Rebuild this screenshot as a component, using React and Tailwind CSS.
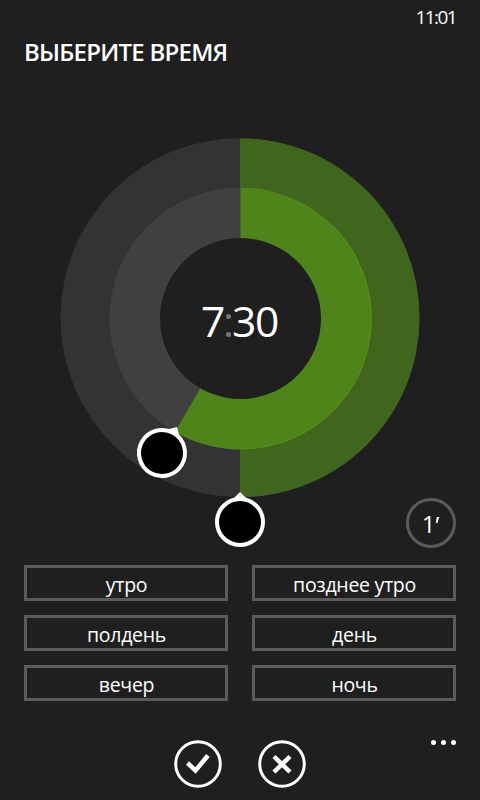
const presets = ['утро', 'позднее утро', 'полдень', 'день', 'вечер', 'ночь'];

function Handle({ transform }) {
  return (
    <g transform={transform}>
      <path d="M-7 -23 L0 -30 L7 -23 Z" fill="#fff" />
      <circle r="23" fill="#000" stroke="#fff" strokeWidth="4" />
    </g>
  );
}

function Dial() {
  return (
    <svg className="block" width="480" height="440" viewBox="0 120 480 440">
      <circle cx="240" cy="317.7" r="179.5" fill="#333333" />
      <path d="M240 138.2 A179.5 179.5 0 0 1 240 497.2 Z" fill="#3f661c" />
      <circle cx="240.5" cy="318.5" r="131" fill="#404040" />
      <path d="M240.5 318.5 V187.5 A131 131 0 1 1 175 431.9 Z" fill="#4e841a" />
      <path d="M333 226 A130.5 130.5 0 0 1 240.5 449" fill="none" stroke="#529512" strokeWidth="1" />
      <circle cx="240.5" cy="318.5" r="80.5" fill="#1f1f1f" />
      <Handle transform="translate(162 453) rotate(30)" />
      <Handle transform="translate(240 522)" />
    </svg>
  );
}

export default function App() {
  return (
    <main className="flex h-[800px] w-[480px] flex-col overflow-hidden bg-[#1f1f1f] font-['Open_Sans','Noto_Sans',sans-serif] text-white">
      <header className="flex h-[120px] flex-col px-6">
        <time className="mt-[3px] h-7 self-end text-[19px] leading-7 tracking-[-1.6px]">11:01</time>
        <h1 className="mt-[5px] text-[24px] leading-8 font-semibold tracking-[-0.75px] whitespace-nowrap">ВЫБЕРИТЕ ВРЕМЯ</h1>
      </header>
      <section className="relative h-[445px]">
        <Dial />
        <div className="absolute top-[171px] left-[201px] flex h-[60px] items-center text-[42.5px] leading-[60px] tracking-[-1.3px]">
          <span>7</span>
          <span className="flex h-[60px] w-2 flex-col items-center gap-[13px] pt-[22.5px]">
            <i className="h-[5px] w-[5px] rounded-full bg-[#777]" />
            <i className="h-[5px] w-[5px] rounded-full bg-[#777]" />
          </span>
          <span>30</span>
        </div>
        <button className="absolute top-[378px] left-[406px] flex h-[50px] w-[50px] items-center justify-center rounded-full border-3 border-[#5b5b5b] pt-px text-[24px]">
          <span>1</span>
          <svg className="-mt-2" width="5" height="8" viewBox="0 0 5 8">
            <path d="M1.8 1 H4.3 L2.3 7 H0.8 Z" fill="#fff" />
          </svg>
        </button>
      </section>
      <section className="grid grid-cols-2 gap-x-6 gap-y-3.5 px-6">
        {presets.map((name) => (
          <button key={name} className="h-9 border-3 border-[#5b5b5b] pt-1 pl-px text-[19.5px] leading-[26px] tracking-[-0.3px]">
            {name}
          </button>
        ))}
      </section>
      <footer className="relative flex flex-1 justify-center gap-9 pt-[39px]">
        <svg width="48" height="48" viewBox="0 0 48 48" fill="none" stroke="#fff">
          <circle cx="24" cy="24" r="22.3" strokeWidth="3" />
          <path d="M13.5 23 L21.5 30.5 L34 15.5" strokeWidth="4.5" />
        </svg>
        <svg width="48" height="48" viewBox="0 0 48 48" fill="none" stroke="#fff">
          <circle cx="24" cy="24" r="22.3" strokeWidth="3" />
          <path d="M16 16.5 L32 32 M32 16.5 L16 32" strokeWidth="4.5" />
        </svg>
        <div className="absolute top-[39px] right-6 flex gap-[5px]">
          <i className="h-[5px] w-[5px] rounded-full bg-white" />
          <i className="h-[5px] w-[5px] rounded-full bg-white" />
          <i className="h-[5px] w-[5px] rounded-full bg-white" />
        </div>
      </footer>
    </main>
  );
}
